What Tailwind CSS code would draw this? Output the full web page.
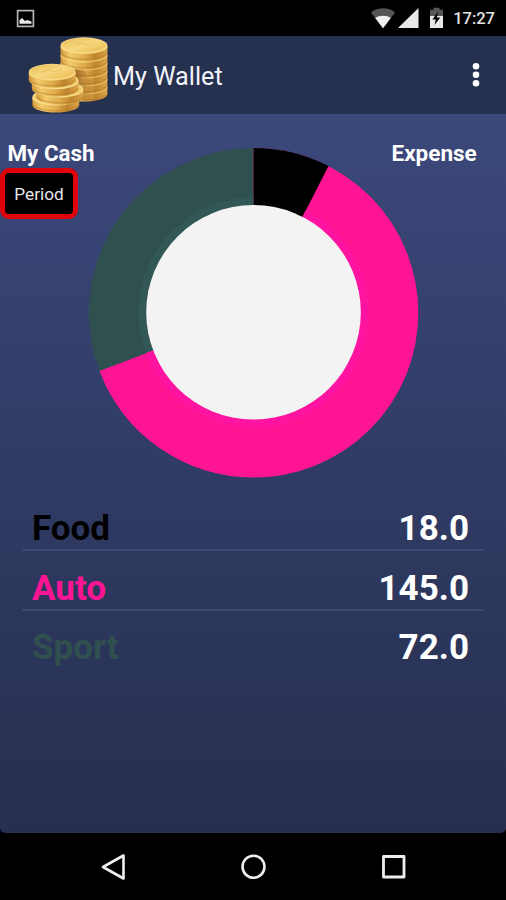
<!DOCTYPE html>
<html lang="en">
<head>
  <meta charset="UTF-8" />
  <meta name="viewport" content="width=device-width, initial-scale=1.0" />
  <title>My Wallet</title>
  <script src="https://cdn.jsdelivr.net/npm/@tailwindcss/browser@4"></script>
</head>
<body class="bg-black font-[Roboto,sans-serif] h-screen overflow-hidden">
  <div class="flex flex-col h-full">
    <!-- Status bar -->
    <div class="h-9 shrink-0 flex items-center justify-between pl-4 pr-[11px] text-[#e4e4e4]">
      <svg class="w-[19px] h-[19px]" viewBox="0 0 19 19">
        <rect x="1.6" y="1.6" width="15.8" height="15.8" fill="none" stroke="#b4b4b4" stroke-width="1.7" />
        <path d="M3.5 14.8V11.2L6 9L9 12L11 11L15.5 12.5V14.8Z" fill="#e8e8e8" />
      </svg>
      <div class="flex items-center">
        <svg class="w-[26px] h-[22px]" viewBox="0 0 26 22">
          <path d="M13 21.3L1 5.4C7.5 -.1 18.5 -.1 25 5.4Z" fill="#555" />
          <path d="M13 21.3L5.2 11C9 8 17 8 20.8 11Z" fill="#f0f0f0" />
        </svg>
        <svg class="ml-0.5 w-[22px] h-[22px]" viewBox="0 0 22 22">
          <path d="M.5 21V20.5L20.5 1V21Z" fill="#e8e8e8" />
        </svg>
        <svg class="ml-[9px] w-[15px] h-[22px]" viewBox="0 0 15 22">
          <path d="M1 2.8H4.5V.8H10.5V2.8H14V9H1Z" fill="#555" />
          <path d="M1 9H14V21H1Z" fill="#e8e8e8" />
          <path d="M9 4.8L3.4 12.5H6.8L5.5 18L11.3 10.4H7.9Z" fill="#000" />
        </svg>
        <span class="ml-[9px] pt-0.5 text-[16.5px] leading-none font-medium">17:27</span>
      </div>
    </div>

    <!-- App bar -->
    <header class="h-[78px] shrink-0 flex items-center bg-[#26304f] pl-7 pr-[26px]">
      <svg class="w-20 h-[78px]" viewBox="28 36 80 78">
        <defs>
          <linearGradient id="rim">
            <stop offset="0" stop-color="#d49a3c" />
            <stop offset=".2" stop-color="#f2ca6c" />
            <stop offset=".5" stop-color="#e0ac4a" />
            <stop offset=".75" stop-color="#bf842f" />
            <stop offset="1" stop-color="#dda748" />
          </linearGradient>
          <linearGradient id="face" x1="0" y1="0" x2="1" y2="1">
            <stop offset="0" stop-color="#e9bd5a" />
            <stop offset=".5" stop-color="#f7d77e" />
            <stop offset="1" stop-color="#e8b74d" />
          </linearGradient>
          <linearGradient id="shade">
            <stop offset="0" stop-color="#7a3f0c" stop-opacity=".75" />
            <stop offset="1" stop-color="#7a3f0c" stop-opacity="0" />
          </linearGradient>
          <g id="edge">
            <path d="M-23.4 0V8A23.4 7.6 0 0 0 23.4 8V0Z" fill="url(#rim)" />
            <path d="M-23.2 1.2A23.4 7.6 0 0 0 23.2 1.2" fill="none" stroke="#f8da88" stroke-opacity=".6" stroke-width="1.8" />
            <path d="M-23 7.6A23.4 7.6 0 0 0 23 7.6" fill="none" stroke="#b07626" stroke-opacity=".45" stroke-width="1.2" />
          </g>
          <g id="coin">
            <use href="#edge" />
            <ellipse rx="23.4" ry="8.2" fill="#f8da86" />
            <ellipse cy="-.4" rx="22" ry="7.2" fill="url(#face)" />
          </g>
        </defs>
        <use href="#edge" x="84" y="86" />
        <use href="#edge" x="84" y="78" />
        <use href="#edge" x="84" y="70" />
        <use href="#edge" x="84" y="62" />
        <use href="#edge" x="84" y="54" />
        <use href="#coin" x="84" y="45.5" />
        <path d="M72 69L84 70L91 82L92 101L72 99Z" fill="url(#shade)" />
        <use href="#coin" x="55.8" y="97" />
        <use href="#coin" x="59.8" y="89" />
        <use href="#coin" x="55.2" y="80.8" />
        <use href="#coin" x="52.2" y="72" />
        <path d="M42 72L49 70L55 72L62 69M75 45L82 43L87 45L94 42" fill="none" stroke="#dda944" stroke-opacity=".6" stroke-width=".8" />
      </svg>
      <h1 class="ml-[5px] flex-1 text-[25.2px] leading-none text-[#f2f4fc] whitespace-nowrap pt-1">My Wallet</h1>
      <svg class="w-2 h-[26px]" viewBox="0 0 8 26" fill="#fff">
        <circle cx="4" cy="4.2" r="3.3" />
        <circle cx="4" cy="12.8" r="3.3" />
        <circle cx="4" cy="21.2" r="3.3" />
      </svg>
    </header>

    <!-- Main Content -->
    <main class="flex-1 flex flex-col rounded-b-[5px] bg-linear-to-b from-[#3b487b] to-[#262f4f]">
      <div class="grid grid-cols-[89px_330px_1fr] h-[364px] pt-[34px]">
        <div class="relative z-10 flex flex-col items-start -mt-[9px]">
          <div class="pl-[7.5px] text-[22.4px] leading-7 font-bold text-white whitespace-nowrap">My Cash</div>
          <button class="mt-px w-[78px] h-[51px] rounded-[9px] border-[5px] border-[#df0208] bg-black text-[#e8e8e8] text-[17.2px] leading-none pt-0.5">Period</button>
        </div>

        <!-- Expense chart -->
        <svg class="w-[330px] h-[330px]" viewBox="0 0 330 330">
          <g fill="none" stroke-width="164.7" transform="rotate(-90 164.6 164.8)">
            <circle cx="164.6" cy="164.8" r="82.35" stroke="#30504f" />
            <circle cx="164.6" cy="164.8" r="82.35" stroke="#ff1493" pathLength="360" stroke-dasharray="249.3 360" />
            <circle cx="164.6" cy="164.8" r="82.35" stroke="#000" pathLength="360" stroke-dasharray="27.1 360" />
          </g>
          <circle cx="164.5" cy="164.3" r="111" fill="none" stroke="#356560" stroke-opacity=".4" stroke-width="8" pathLength="360" stroke-dasharray="110.7 360" transform="rotate(159.3 164.5 164.3)" />
          <circle cx="164.5" cy="164.3" r="111" fill="none" stroke="#ff14a2" stroke-width="8" pathLength="360" stroke-dasharray="222.2 360" transform="rotate(-62.9 164.5 164.3)" />
          <circle cx="164.5" cy="164.3" r="107.3" fill="#f3f3f3" />
        </svg>

        <div class="-mt-[9px] -ml-[27.5px] text-[22.5px] leading-7 font-bold text-white">Expense</div>
      </div>

      <!-- Categories -->
      <div class="mx-[22px] pt-[13px] text-[35px] font-bold leading-[58px] text-white">
        <div class="flex justify-between pl-2.5 pr-[15px] h-[60px] pt-[9px] border-b-2 border-[#3b486f]">
          <span class="text-black">Food</span>
          <span>18.0</span>
        </div>
        <div class="flex justify-between pl-2.5 pr-[15px] h-[60px] pt-[9px] border-b-2 border-[#3b486f]">
          <span class="text-[#ff1493]">Auto</span>
          <span>145.0</span>
        </div>
        <div class="flex justify-between pl-2.5 pr-[15px] h-[60px] pt-2">
          <span class="text-[#30504f]">Sport</span>
          <span>72.0</span>
        </div>
      </div>
    </main>

    <!-- Navigation bar -->
    <nav class="h-[67px] shrink-0 flex items-center justify-between px-[99px]">
      <svg class="w-7 h-7" viewBox="0 0 28 28" fill="none" stroke="#eee" stroke-width="2.6" stroke-linejoin="round">
        <path d="M24.5 2.5V25.5L4 14Z" />
      </svg>
      <svg class="w-7 h-7" viewBox="0 0 28 28" fill="none" stroke="#eee" stroke-width="2.6">
        <circle cx="14.5" cy="13.7" r="11" />
      </svg>
      <svg class="w-7 h-7" viewBox="0 0 28 28" fill="none" stroke="#eee" stroke-width="2.8" stroke-linejoin="round">
        <rect x="4.5" y="3.5" width="20.5" height="20.5" />
      </svg>
    </nav>
  </div>
</body>
</html>
